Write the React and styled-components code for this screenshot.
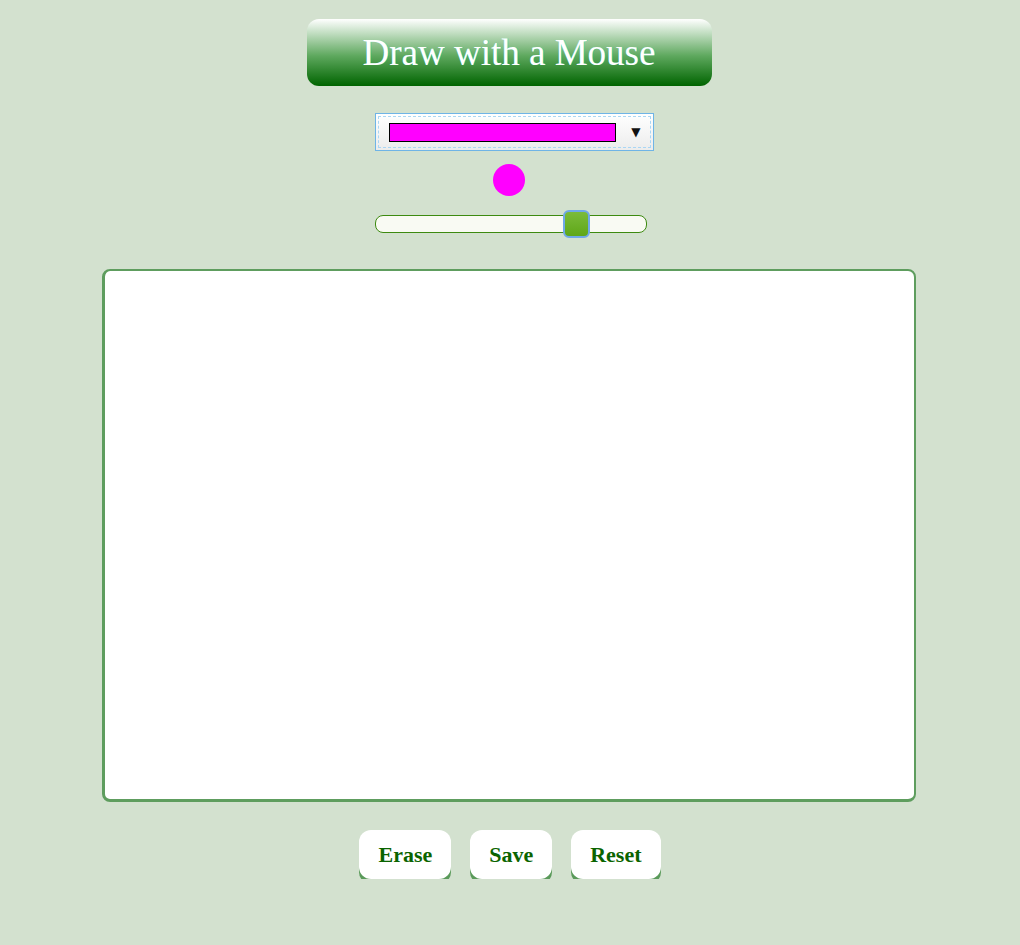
import React, { useState } from "react";
import styled, { createGlobalStyle } from "styled-components";

const GlobalStyle = createGlobalStyle`
  body {
    margin: 0;
    background: #d3e1cf;
    font-family: "Liberation Serif", "Times New Roman", serif;
  }
`;

export default function App() {
  const [color] = useState("#ff00ff");
  const [size, setSize] = useState(77);

  return (
    <>
      <GlobalStyle />
      <StPage>
        <StTitle>Draw with a Mouse</StTitle>

        {/* 색 선택 */}
        <StPicker>
          <StPickerInner>
            <StSwatch $color={color} />
            <StArrow>▼</StArrow>
          </StPickerInner>
        </StPicker>

        <StDot $color={color} />

        <StSlider
          type="range"
          min="0"
          max="100"
          value={size}
          onChange={(e) => setSize(Number(e.target.value))}
        />

        <StCanvas />

        <StBtnRow>
          <StButton>Erase</StButton>
          <StButton>Save</StButton>
          <StButton>Reset</StButton>
        </StBtnRow>
      </StPage>
    </>
  );
}

const StPage = styled.div`
  display: flex;
  flex-direction: column;
  align-items: center;
  padding-top: 19px;
`;

const StTitle = styled.h1`
  margin: 0;
  width: 405px;
  height: 67px;
  box-sizing: border-box;
  border-radius: 12px;
  background: linear-gradient(to bottom, #ffffff 0%, #5ea85e 55%, #006400 100%);
  color: #ffffff;
  font-weight: normal;
  font-size: 37px;
  line-height: 67px;
  text-align: center;
  text-shadow: 1px 0 0 rgba(0, 255, 255, 0.35);
  margin-left: -2px;
`;

const StPicker = styled.div`
  margin-top: 27px;
  width: 279px;
  height: 38px;
  box-sizing: border-box;
  border: 1px solid #6fb4e6;
  background: linear-gradient(to bottom, #ffffff, #ececec);
  padding: 2px;
  margin-left: 8px;
`;

const StPickerInner = styled.div`
  height: 100%;
  box-sizing: border-box;
  border: 1px dashed #a9d6f5;
  display: flex;
  align-items: center;
  padding: 0 9px 0 10px;
`;

const StSwatch = styled.div`
  width: 227px;
  height: 19px;
  box-sizing: border-box;
  background: ${(p) => p.$color};
  border: 1px solid #000;
`;

const StArrow = styled.span`
  margin-left: auto;
  font-family: "DejaVu Sans", sans-serif;
  font-size: 12px;
  color: #111;
`;

const StDot = styled.div`
  margin-top: 13px;
  width: 32px;
  height: 32px;
  border-radius: 50%;
  background: ${(p) => p.$color};
  margin-left: -2px;
`;

const StSlider = styled.input`
  -webkit-appearance: none;
  appearance: none;
  margin: 19px 0 0 2px;
  width: 272px;
  height: 18px;
  box-sizing: border-box;
  border: 1px solid #3d8a10;
  border-radius: 8px;
  background: #f9faf3;
  outline: none;

  &::-webkit-slider-thumb {
    -webkit-appearance: none;
    width: 27px;
    height: 28px;
    box-sizing: border-box;
    border-radius: 6px;
    border: 2px solid #6fa8e8;
    background: linear-gradient(to bottom, #7bbb3a, #5fa718);
    cursor: pointer;
  }
`;

const StCanvas = styled.div`
  margin-top: 36px;
  margin-left: -2px;
  width: 814px;
  height: 533px;
  box-sizing: border-box;
  background: #ffffff;
  border: 2px solid #5e9d5e;
  border-left-width: 3px;
  border-bottom-width: 3px;
  border-radius: 8px;
`;

const StBtnRow = styled.div`
  display: flex;
  gap: 19px;
  margin-top: 28px;
`;

const StButton = styled.button`
  height: 49px;
  padding: 0 19px;
  border: none;
  border-radius: 12px;
  background: #ffffff;
  box-shadow: 0 5px 0 #5a9a5a;
  color: #0b6400;
  font-family: "Liberation Serif", "Times New Roman", serif;
  font-weight: bold;
  font-size: 22px;
  cursor: pointer;
`;
